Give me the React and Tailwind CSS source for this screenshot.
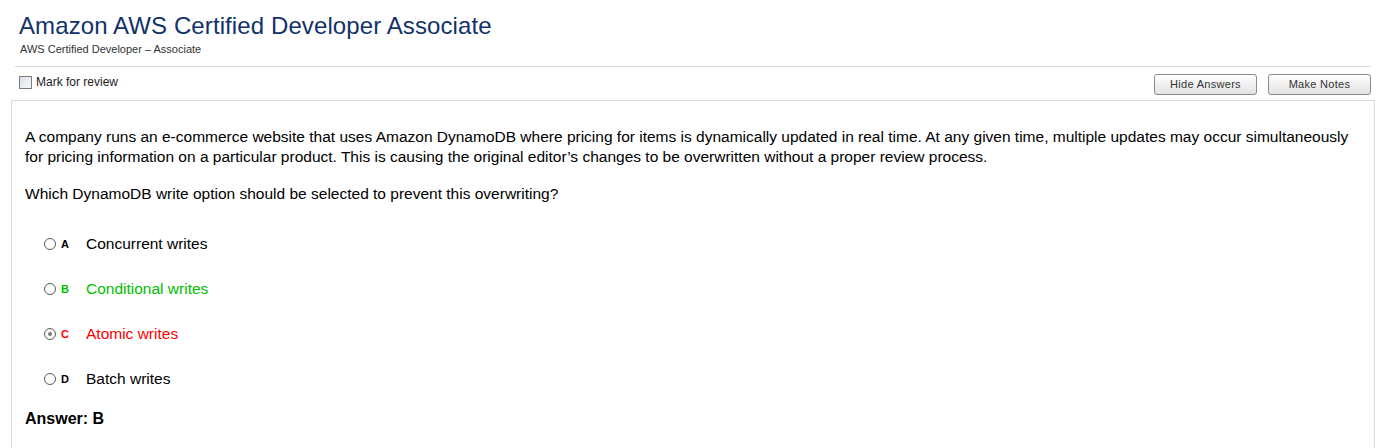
export default function App() {
  const options = [
    { letter: "A", text: "Concurrent writes", color: "text-black", selected: false },
    { letter: "B", text: "Conditional writes", color: "text-[#00c000]", selected: false },
    { letter: "C", text: "Atomic writes", color: "text-[#ff0000]", selected: true },
    { letter: "D", text: "Batch writes", color: "text-black", selected: false },
  ];

  return (
    <div className="min-h-screen bg-white px-[11px] font-['Liberation_Sans',Arial,sans-serif] text-black">
      <div className="mx-[4px] border-b border-[#dcdcdc] pt-[12px] pb-[10px]">
        <h1 className="pl-[4px] text-[24px] leading-[28px] tracking-[0.1px] text-[#12326a]">
          Amazon AWS Certified Developer Associate
        </h1>
        <p className="mt-[3px] pl-[5px] text-[11px] leading-[13px] text-[#333]">
          AWS Certified Developer – Associate
        </p>
      </div>

      <div className="flex h-[33px] items-start justify-between pl-[8px] pr-[4px]">
        <label className="mt-[9px] flex items-center gap-[4px] text-[12px] leading-[13px] text-[#222]">
          <span className="block h-[13px] w-[13px] border border-[#7b7b7b] bg-gradient-to-br from-[#dfe3ea] to-[#f4f6f9]" />
          Mark for review
        </label>
        <div className="mt-[7px] flex gap-[11px]">
          <button className="h-[21px] w-[103px] rounded-[3px] border border-[#8a8a8a] bg-gradient-to-b from-white to-[#e2e2e2] text-[11px] tracking-[0.3px] text-[#333]">
            Hide Answers
          </button>
          <button className="h-[21px] w-[103px] rounded-[3px] border border-[#8a8a8a] bg-gradient-to-b from-white to-[#e2e2e2] text-[11px] tracking-[0.3px] text-[#333]">
            Make Notes
          </button>
        </div>
      </div>

      <div className="min-h-[400px] border border-[#dcdcdc] px-[13px] pt-[26px]">
        <p className="text-[15.5px] leading-[20px]">
          A company runs an e-commerce website that uses Amazon DynamoDB where pricing for items is dynamically updated in real time. At any given time, multiple updates may occur simultaneously for pricing information on a particular product. This is causing the original editor’s changes to be overwritten without a proper review process.
        </p>
        <p className="mt-[17px] text-[15.5px] leading-[20px]">
          Which DynamoDB write option should be selected to prevent this overwriting?
        </p>

        <div className="mt-[30px] flex flex-col gap-[25px] pl-[19px]">
          {options.map((o) => (
            <div key={o.letter} className="flex h-[20px] items-center">
              <span className="flex h-[12px] w-[12px] items-center justify-center rounded-full border border-[#5a5a5a] bg-white">
                {o.selected && <span className="h-[4px] w-[4px] rounded-full bg-[#777]" />}
              </span>
              <span className={`ml-[5px] w-[25px] text-[11px] font-bold ${o.color}`}>{o.letter}</span>
              <span className={`text-[15.5px] leading-[20px] ${o.color}`}>{o.text}</span>
            </div>
          ))}
        </div>

        <p className="mt-[20px] text-[16px] font-bold leading-[20px]">Answer: B</p>
      </div>
    </div>
  );
}
